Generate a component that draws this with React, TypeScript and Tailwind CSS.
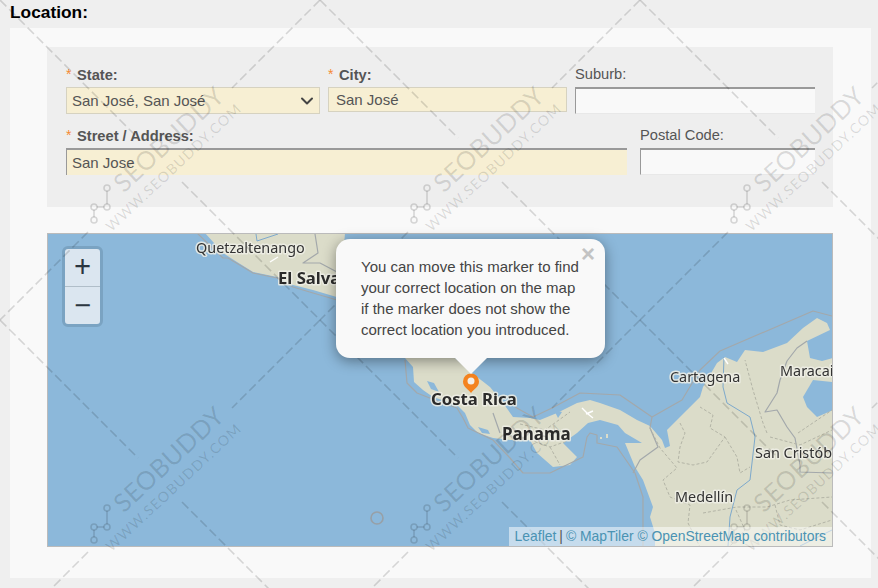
import { ChevronDown } from "lucide-react";

const tiles = [
  [0, 0],
  [320, 0],
  [640, 0],
  [0, 320],
  [320, 320],
  [640, 320],
];

function Watermark() {
  return (
    <svg className="pointer-events-none absolute left-0 top-0 z-10 h-[588px] w-[878px]" viewBox="0 0 878 588">
      {tiles.map(([x, y]) => (
        <g key={`${x}-${y}`} transform={`translate(${x} ${y})`} fill="none" stroke="#000" strokeOpacity="0.14">
          <path d="M0 0L138 138M182 182L320 320M320 0L232 88M88 232L0 320" strokeWidth="1.6" strokeDasharray="9 4" />
          <path d="M107 191V204M104 207H97M94 210V217" strokeWidth="1.6" />
          <circle cx="107" cy="188" r="3" strokeWidth="1.6" />
          <circle cx="107" cy="207" r="3" strokeWidth="1.6" />
          <circle cx="94" cy="207" r="3" strokeWidth="1.6" />
          <circle cx="94" cy="220" r="3" strokeWidth="1.6" />
          <text
            x="175"
            y="146"
            textAnchor="middle"
            transform="rotate(-43 175 146)"
            fill="#000"
            fillOpacity="0.13"
            stroke="none"
            fontSize="25.5"
            fontFamily="Lato, sans-serif"
            letterSpacing="0.3"
          >
            SEOBUDDY
          </text>
          <text
            x="177"
            y="171"
            textAnchor="middle"
            transform="rotate(-43 177 171)"
            fill="#000"
            fillOpacity="0.13"
            stroke="none"
            fontSize="14.3"
            fontFamily="Lato, sans-serif"
            letterSpacing="1.2"
          >
            WWW.SEOBUDDY.COM
          </text>
        </g>
      ))}
    </svg>
  );
}

function MapLabel({ x, y, size, bold, children }: { x: number; y: number; size: number; bold?: boolean; children: string }) {
  return (
    <text
      x={x}
      y={y}
      fontSize={size}
      fontWeight={bold ? 700 : 400}
      fontFamily="'Noto Sans', sans-serif"
      fill={bold ? "#2b2b2b" : "#333"}
      stroke="#eeeee6"
      strokeOpacity="0.85"
      strokeWidth="3"
      strokeLinejoin="round"
      style={{ paintOrder: "stroke" }}
    >
      {children}
    </text>
  );
}

function MapDrawing() {
  return (
    <svg className="absolute inset-0 h-full w-full blur-[0.4px]" viewBox="48 234 784 312">
      <rect x="48" y="234" width="784" height="312" fill="#8cb8da" />
      <path d="M205 233L223 253L237 262L253 272L277 277L293 285L313 290L340 298L345 233Z" fill="#dbdcc9" />
      <path
        d="M405 358L455 358L472 373L490 387L503 403L513 417L530 418L540 420L557 413L577 403L590 400L600 403L620 410L637 420L650 426L662 440L665 448L670 446L667 430L687 410L700 397L703 387L717 363L725 357L737 362L745 350L763 352L787 343L803 328L817 318L827 323L830 330L807 341L810 358L822 361L833 358L833 547L655 547L655 533L650 517L653 507L643 480L635 467L625 443L642 443L625 433L618 425L600 420L588 423L577 433L563 443L577 457L570 465L553 467L537 453L530 440L510 440L493 438L478 433L470 425L465 413L457 405L433 397L423 390L414 382L413 367Z"
        fill="#dbdcc9"
      />
      <path d="M803 397L813 380L833 382L833 410L817 417L807 407Z" fill="#8cb8da" />
      <path d="M427 381L434 383L439 392L431 389Z M478 427L488 430L490 434L482 433Z" fill="#8cb8da" />
      <path d="M554 410L562 412L558 418Z" fill="#8cb8da" />
      <path d="M606 434L608 434L608 438L606 438Z M600 437L602 437L602 439L600 439Z" fill="#dbdcc9" />

      <g fill="none" stroke="#a3a8ab" strokeWidth="1.2" strokeLinejoin="round">
        <path d="M197 233L223 258L228 258L253 273L277 278L293 287L313 293L337 300" />
        <path d="M315 234L318 253L303 263L320 263L337 272" />
        <path d="M405 360L407 383L417 393L440 402L457 408L463 418L468 428L493 440L510 458L523 473L550 473L583 457L587 437L590 433L597 435L597 443L617 447L635 473L643 497L643 547" />
        <path d="M515 407L533 417L552 408L580 393L620 395L652 417L650 428L658 447L640 460L633 473" />
        <path d="M652 417L682 400L700 370L720 351L813 311L832 316" />
        <path d="M807 341L797 348L787 361L780 380L777 393L765 412L777 410L787 427L795 438L800 465L800 472L832 473" />
        <path d="M493 413L500 433" />
      </g>
      <g fill="none" stroke="#b3b4a6" strokeWidth="1" strokeDasharray="3 2">
        <path d="M680 423L685 433L680 447L678 462L693 465L707 462L725 437L710 428L713 415L700 407" />
        <path d="M725 437L737 457L740 473L750 467" />
        <path d="M650 428L660 448L677 468L663 480L670 497L690 505L688 523L700 547" />
        <path d="M703 513L737 507L767 507L790 500L832 497" />
        <path d="M767 433L763 423L753 390L745 360" />
        <path d="M798 433L832 410" />
        <path d="M530 440L550 447L570 440M550 447L560 465M520 424L545 430L570 412" />
        <path d="M736 510L745 530L730 546M775 505L780 525L800 530L832 520" />
        <path d="M770 437L800 445L832 430" />
      </g>
      <g fill="none" stroke="#7da9cc" strokeWidth="1">
        <path d="M724 357L723 387L727 403L750 417L755 437L750 480L737 490L730 517L728 546" />
        <path d="M256 234L257 241L278 234" />
        <path d="M800 546L832 530" />
      </g>
      <g fill="none" stroke="#fff" strokeWidth="1.4">
        <path d="M270 262L278 257" />
        <path d="M582 408L588 414L593 418M586 414L593 411" />
        <path d="M724 358L728 364" />
      </g>

      <MapLabel x={196} y={253} size={14.4}>Quetzaltenango</MapLabel>
      <MapLabel x={278} y={284} size={16.7} bold>El Salvador</MapLabel>
      <MapLabel x={431} y={405} size={16.7} bold>Costa Rica</MapLabel>
      <MapLabel x={502} y={440} size={17} bold>Panama</MapLabel>
      <MapLabel x={670} y={382} size={14.4}>Cartagena</MapLabel>
      <MapLabel x={780} y={376} size={14.4}>Maracaibo</MapLabel>
      <MapLabel x={755} y={458} size={14.4}>San Cristóbal</MapLabel>
      <MapLabel x={675} y={502} size={14.4}>Medellín</MapLabel>

      <path d="M471 393C468 389 463 387 463 381.500A8 8 0 0 1 479 381.500C479 387 474 389 471 393Z" fill="#f4831f" />
      <circle cx="471" cy="381" r="3.500" fill="#f3efe9" />
    </svg>
  );
}

function Field({
  label,
  required,
  className,
  inputClass,
  value,
}: {
  label: string;
  required?: boolean;
  className: string;
  inputClass: string;
  value?: string;
}) {
  return (
    <div className={className}>
      <div className="flex h-[24px] items-center pb-[2px] text-[14.67px] text-[#555]">
        {required && <span className="mr-[6px] w-[5px] text-[14px] text-[#f58a33]">*</span>}
        <span className={required ? "pt-[1px] text-[14.67px] font-bold" : ""}>{label}</span>
      </div>
      <input readOnly defaultValue={value} className={inputClass} />
    </div>
  );
}

export default function App() {
  return (
    <div className="relative h-[588px] w-[878px] overflow-hidden bg-[#efefef] font-['Liberation_Sans',Arial,sans-serif]">
      <div className="flex h-[28px] items-center pb-[3px] pl-[10px] text-[17.33px] font-bold text-black">Location:</div>
      <div className="ml-[10px] h-[550px] w-[861px] bg-[#f9f9f9] px-[37px] pt-[19px]">
        <div className="h-[160px] w-[786px] bg-[#eeeeee] pl-[19px] pt-[16px]">
          <div className="flex gap-[8px]">
            <div className="w-[254px]">
              <div className="flex h-[24px] items-center pb-[2px] text-[14px] text-[#555]">
                <span className="mr-[6px] w-[5px] text-[#f58a33]">*</span>
                <span className="pt-[1px] text-[14.67px] font-bold">State:</span>
              </div>
              <div className="relative h-[27px] border border-[#d6d2c0] bg-[#f7efd3]">
                <select
                  defaultValue="San José, San José"
                  className="h-full w-full appearance-none bg-transparent pl-[5px] pt-[1px] text-[15px] text-[#555] outline-none"
                >
                  <option>San José, San José</option>
                </select>
                <ChevronDown className="pointer-events-none absolute right-[2px] top-[3px] h-[20px] w-[20px] text-[#444]" strokeWidth={2.4} />
              </div>
            </div>
            <Field
              className="w-[239px]"
              label="City:"
              required
              value="San José"
              inputClass="block h-[25px] w-full border border-[#d6d2c0] bg-[#f7efd3] px-[7px] text-[15px] text-[#555] outline-none"
            />
            <Field
              className="w-[240px]"
              label="Suburb:"
              inputClass="block h-[27px] w-full border-t-2 border-l border-b border-t-[#999] border-l-[#999] border-b-[#e8e8e8] bg-[#f9f9f9] px-[5px] text-[15px] text-[#555] outline-none"
            />
          </div>
          <div className="mt-[10px] flex gap-[13px]">
            <Field
              className="w-[561px]"
              label="Street / Address:"
              required
              value="San Jose"
              inputClass="block h-[27px] w-full border-t-2 border-l border-t-[#999] border-l-[#999] bg-[#f7efd3] px-[5px] text-[15px] text-[#555] outline-none"
            />
            <Field
              className="w-[175px]"
              label="Postal Code:"
              inputClass="block h-[27px] w-full border-t-2 border-l border-b border-t-[#999] border-l-[#999] border-b-[#e8e8e8] bg-[#f9f9f9] px-[5px] text-[15px] text-[#555] outline-none"
            />
          </div>
        </div>

        <div className="relative mt-[26px] h-[314px] w-[786px] border border-[#bbbbbb]">
          <MapDrawing />

          <div className="absolute left-[14px] top-[12px] z-[5] flex h-[81px] w-[41px] flex-col overflow-hidden rounded-[6px] border-[3px] border-[#7aa3c2] bg-[#dbe6f0] font-['Noto_Sans',sans-serif] text-[#2b3640]">
            <div className="flex h-[38px] items-center justify-center border-b border-[#b0bec9] pb-[4px] text-[30px] leading-none">+</div>
            <div className="flex flex-1 items-center justify-center pb-[2px] text-[30px] leading-none">−</div>
          </div>

          <div className="absolute left-[288px] top-[5px] z-20 h-[119px] w-[269px] rounded-[14px] bg-[#f9f9f9] pl-[25px] pt-[17px] text-[15px] leading-[21px] text-[#444] shadow-[0_3px_14px_rgba(0,0,0,0.4)]">
            You can move this marker to find
            <br />
            your correct location on the map
            <br />
            if the marker does not show the
            <br />
            correct location you introduced.
            <span className="absolute right-[10px] top-[5px] text-[24px] font-bold leading-[20px] text-[#c3c3c3]">×</span>
            <div className="absolute left-[119px] top-[119px] h-0 w-0 border-x-[16px] border-t-[16px] border-x-transparent border-t-[#f9f9f9]" />
          </div>

          <div className="absolute bottom-0 right-0 z-[15] flex h-[19px] items-center bg-white/50 px-[6px] text-[13.9px] text-[#4a93b3]">
            Leaflet<span className="mx-[3px] text-[#555]">|</span>© MapTiler © OpenStreetMap contributors
          </div>

          <svg className="absolute left-[321px] top-[276px] z-[15] h-[16px] w-[16px]" viewBox="0 0 16 16">
            <circle cx="8" cy="8" r="6" fill="none" stroke="#9a9a9a" strokeOpacity="0.8" strokeWidth="1.6" />
          </svg>
        </div>
      </div>
      <Watermark />
    </div>
  );
}
